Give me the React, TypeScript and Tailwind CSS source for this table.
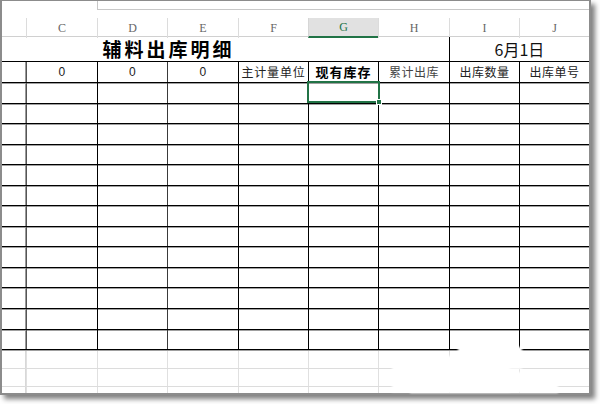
import React from "react";

const GRID = "grid grid-cols-[24px_71px_70px_71px_70px_70px_71px_70px_70px]";
const CJK = "font-['Noto_Sans_CJK_SC','Noto_Sans',sans-serif]";
const LETTERS = ["C", "D", "E", "F", "G", "H", "I", "J"];
const HEAD = ["0", "0", "0", "主计量单位", "现有库存", "累计出库", "出库数量", "出库单号"];

function DataRow({ selected }: { selected?: boolean }) {
  return (
    <div className={`${GRID} h-[20.55px] shrink-0 border-b border-black shadow-[0_1px_0_#a0a0a0] relative`}>
      <div className="border-r border-[#9a9a9a]" />
      {LETTERS.map((l, i) => (
        <div
          key={l}
          className={`relative border-l ${i === 0 ? "border-[#555]" : i === 2 ? "border-[#3a3a3a]" : "border-black"}`}
        >
          {selected && l === "G" && (
            <div className="absolute left-[-2px] top-[-2px] w-[73px] h-[22px] border-2 border-[#217346] z-10">
              <div className="absolute right-[-4px] bottom-[-4px] w-[6px] h-[6px] bg-[#217346] border border-white" />
            </div>
          )}
        </div>
      ))}
    </div>
  );
}

function LightRow() {
  return (
    <div className={`${GRID} h-[18px] shrink-0 border-b border-[#dcdcdc]`}>
      <div className="border-r border-[#d8d8d8]" />
      {LETTERS.map((l) => (
        <div key={l} className="border-l border-[#e0e0e0]" />
      ))}
    </div>
  );
}

export default function App() {
  return (
    <div className="w-[600px] h-[404px] bg-white relative overflow-hidden">
      <div className="w-[591px] h-[395px] border-l-2 border-t border-r-2 border-b-2 border-[#8c8c8c] shadow-[4px_4px_5px_rgba(0,0,0,0.5)] bg-white overflow-hidden flex flex-col">
        {/* top strip (formula bar remnant) */}
        <div className="h-[17px] shrink-0">
          <div className="ml-[95px] h-[9px] border-l border-b border-[#c8c8c8]" />
        </div>

        {/* column letters */}
        <div className={`${GRID} h-[19px] shrink-0 border-b border-[#d0d0d0] font-['Liberation_Serif',serif] text-[12px] text-[#666]`}>
          <div />
          {LETTERS.map((l) => (
            <div
              key={l}
              className={`flex items-center justify-center border-l ${
                l === "G"
                  ? "border-[#d6d6d6] bg-[#e1e1e1] text-[#217346] border-b-2 border-b-[#217346]"
                  : "border-[#dcdcdc]"
              }`}
            >
              {l}
            </div>
          ))}
        </div>

        {/* title row */}
        <div className={`flex h-[25px] shrink-0 border-b border-black ${CJK}`}>
          <div className="w-[24px]" />
          <div className="w-[282px] flex items-center justify-center text-[19px] font-bold tracking-[3px] text-black pl-[3px]">
            辅料出库明细
          </div>
          <div className="w-[141px]" />
          <div className="w-[140px] border-l border-black flex items-center justify-center text-[16px] text-[#111]">
            6月1日
          </div>
        </div>

        {/* header row */}
        <div className={`${GRID} h-[21px] shrink-0 border-b border-black shadow-[0_1px_0_#a0a0a0] ${CJK} text-[12px] text-[#222]`}>
          <div className="border-r border-[#9a9a9a]" />
          {HEAD.map((h, i) => (
            <div
              key={i}
              className={`flex items-center justify-center border-l whitespace-nowrap overflow-hidden ${
                i === 0 ? "border-[#555]" : i === 2 ? "border-[#3a3a3a]" : "border-black"
              } ${i === 3 ? "tracking-[0.8px]" : "tracking-[0.5px]"} ${
                i === 4 ? "font-bold text-[13px] tracking-[1px] text-black" : ""
              } ${i === 5 ? "text-[#444]" : ""} ${i < 3 ? "font-['Liberation_Sans',sans-serif]" : ""}`}
            >
              {h}
            </div>
          ))}
        </div>

        {/* data rows */}
        {Array.from({ length: 13 }).map((_, i) => (
          <DataRow key={i} selected={i === 0} />
        ))}

        {/* empty grid rows below */}
        <div className="h-[1px] shrink-0" />
        <LightRow />
        <LightRow />
        <LightRow />
      </div>

      {/* erased watermark patches */}
      <div className="absolute left-[458px] top-[347px] w-[64px] h-[22px] bg-white blur-[1px]" />
      <div className="absolute left-[392px] top-[356px] w-[118px] h-[36px] bg-white blur-[1px]" />
      <div className="absolute left-[410px] top-[372px] w-[148px] h-[21px] bg-white blur-[1px]" />
    </div>
  );
}
